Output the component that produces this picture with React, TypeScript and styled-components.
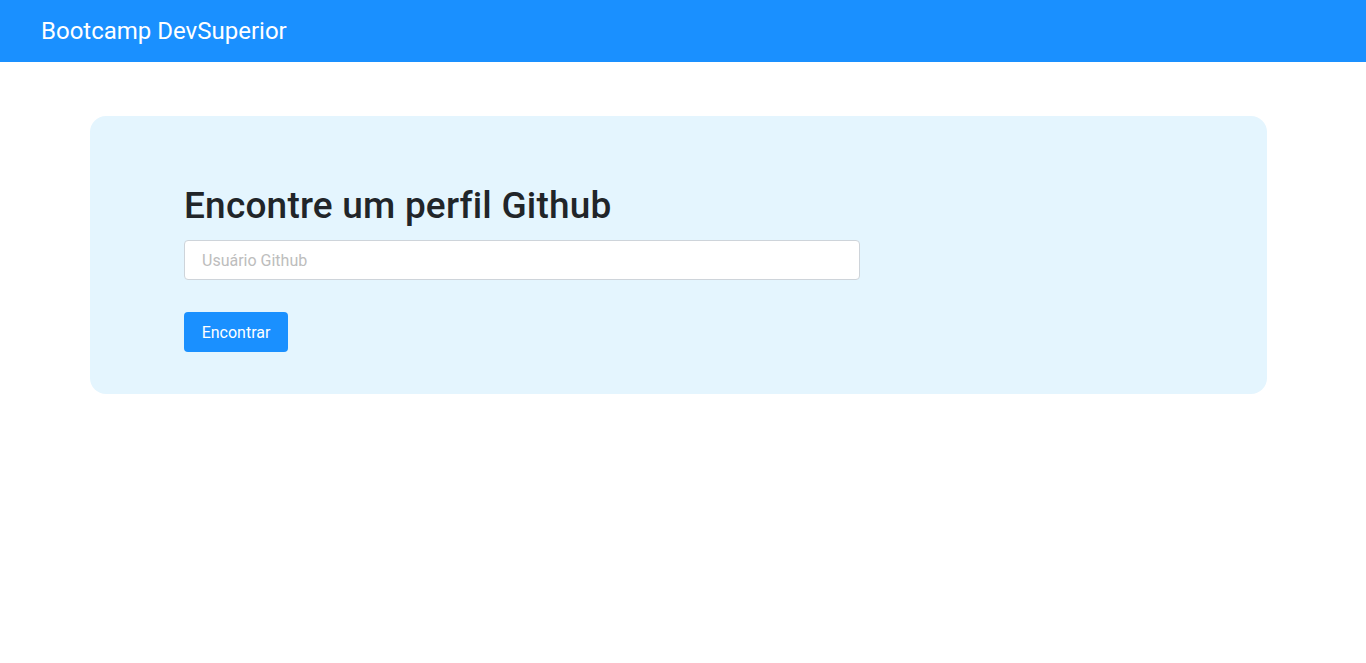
import React from 'react'
import styled, { createGlobalStyle } from 'styled-components'

const GlobalStyle = createGlobalStyle`
  * {
    box-sizing: border-box;
  }

  body {
    margin: 0;
    background: #fff;
    font-family: Roboto, 'Liberation Sans', sans-serif;
  }
`

const Header = styled.header`
  height: 62px;
  background-color: #1a90ff;
  display: flex;
  align-items: center;
  padding: 0 41px;
`

const Brand = styled.a`
  color: #fff;
  font-size: 24px;
  font-weight: 400;
  text-decoration: none;
`

const Main = styled.main`
  padding: 54px 99px 0 90px;
`

const SearchCard = styled.section`
  background-color: #e4f5fe;
  border-radius: 16px;
  padding: 68px 94px 42px;
`

const Title = styled.h1`
  margin: 0 0 12px;
  font-size: 37px;
  font-weight: 500;
  line-height: 44px;
  letter-spacing: 0.2px;
  color: #212529;
`

const Form = styled.form`
  display: flex;
  flex-direction: column;
  align-items: flex-start;
  gap: 32px;
`

const Input = styled.input`
  width: 676px;
  height: 40px;
  padding: 0 17px;
  border: 1px solid #ced4da;
  border-radius: 4px;
  background: #fff;
  font-family: inherit;
  font-size: 16px;
  color: #495057;
  outline: none;

  &::placeholder {
    color: #bdbdbd;
  }
`

const Button = styled.button`
  width: 104px;
  height: 40px;
  padding: 0;
  border: none;
  border-radius: 4px;
  background-color: #1a90ff;
  color: #fff;
  font-family: inherit;
  font-size: 16px;
  text-align: center;
  cursor: pointer;
`

const App: React.FC = () => {
  return (
    <>
      <GlobalStyle />
      <Header>
        <Brand href="#">Bootcamp DevSuperior</Brand>
      </Header>
      <Main>
        <SearchCard>
          <Title>Encontre um perfil Github</Title>
          <Form onSubmit={(e) => e.preventDefault()}>
            <Input type="text" placeholder="Usuário Github" />
            <Button type="submit">Encontrar</Button>
          </Form>
        </SearchCard>
      </Main>
    </>
  )
}

export default App
